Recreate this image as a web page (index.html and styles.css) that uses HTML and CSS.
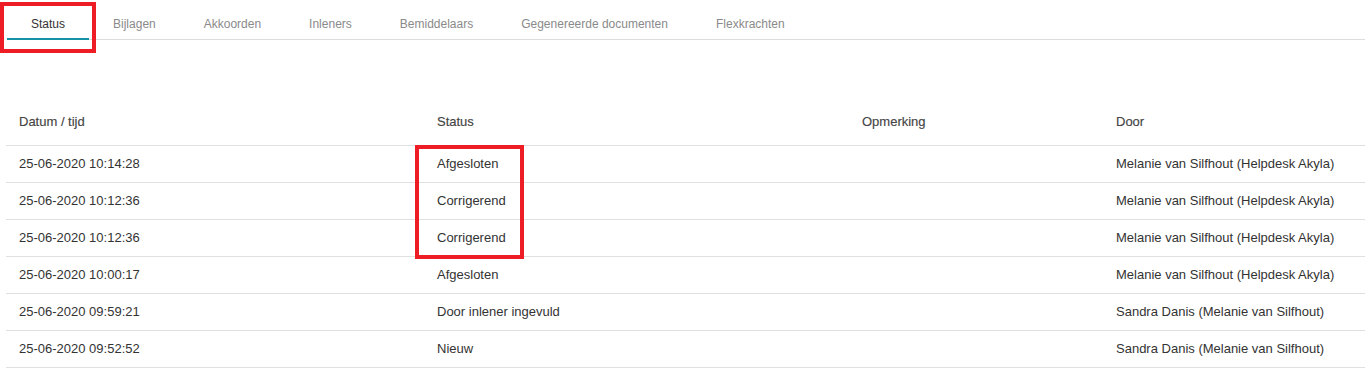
FILE: index.html
```html
<!DOCTYPE html>
<html lang="nl">
<head>
<meta charset="utf-8">
<title>Status</title>
<link rel="stylesheet" href="styles.css">
</head>
<body>
<div class="page">
  <nav class="tabs">
    <a class="tab active">Status</a>
    <a class="tab">Bijlagen</a>
    <a class="tab">Akkoorden</a>
    <a class="tab">Inleners</a>
    <a class="tab">Bemiddelaars</a>
    <a class="tab">Gegenereerde documenten</a>
    <a class="tab">Flexkrachten</a>
  </nav>

  <div class="table">
    <div class="row head">
      <div class="cell">Datum / tijd</div>
      <div class="cell">Status</div>
      <div class="cell">Opmerking</div>
      <div class="cell">Door</div>
    </div>
    <div class="row">
      <div class="cell">25-06-2020 10:14:28</div>
      <div class="cell">Afgesloten</div>
      <div class="cell"></div>
      <div class="cell">Melanie van Silfhout (Helpdesk Akyla)</div>
    </div>
    <div class="row">
      <div class="cell">25-06-2020 10:12:36</div>
      <div class="cell">Corrigerend</div>
      <div class="cell"></div>
      <div class="cell">Melanie van Silfhout (Helpdesk Akyla)</div>
    </div>
    <div class="row">
      <div class="cell">25-06-2020 10:12:36</div>
      <div class="cell">Corrigerend</div>
      <div class="cell"></div>
      <div class="cell">Melanie van Silfhout (Helpdesk Akyla)</div>
    </div>
    <div class="row">
      <div class="cell">25-06-2020 10:00:17</div>
      <div class="cell">Afgesloten</div>
      <div class="cell"></div>
      <div class="cell">Melanie van Silfhout (Helpdesk Akyla)</div>
    </div>
    <div class="row">
      <div class="cell">25-06-2020 09:59:21</div>
      <div class="cell">Door inlener ingevuld</div>
      <div class="cell"></div>
      <div class="cell">Sandra Danis (Melanie van Silfhout)</div>
    </div>
    <div class="row">
      <div class="cell">25-06-2020 09:52:52</div>
      <div class="cell">Nieuw</div>
      <div class="cell"></div>
      <div class="cell">Sandra Danis (Melanie van Silfhout)</div>
    </div>
  </div>

  <div class="mark mark-tab"></div>
  <div class="mark mark-status"></div>
</div>
</body>
</html>
```

FILE: styles.css
```css
* { box-sizing: border-box; }

html, body {
  margin: 0;
  padding: 0;
  background: #fff;
}

body {
  font-family: "Liberation Sans", Arial, sans-serif;
  font-size: 13px;
  color: #333;
}

.page {
  position: relative;
  padding-left: 7px;
  min-height: 383px;
}

.tabs {
  display: flex;
  border-bottom: 1px solid #dcdcdc;
  height: 40px;
  font-size: 12px;
}

.tab {
  display: block;
  padding: 17px 24px 0;
  color: #8a8a8a;
  line-height: 14px;
  height: 40px;
  margin-bottom: -1px;
}

.tab.active {
  color: #333;
  border-bottom: 2px solid #1592a8;
}

.table {
  margin-top: 68px;
  margin-left: -1px;
}

.row {
  display: grid;
  grid-template-columns: 418px 425px 254px 1fr;
  height: 37px;
  align-items: center;
  padding-bottom: 2px;
  border-bottom: 1px solid #e0e0e0;
}

.row.head {
  height: 38px;
  align-items: start;
  padding-top: 6px;
  padding-bottom: 0;
}

.row.head .cell {
  color: #444;
  -webkit-text-stroke: 0.15px #444;
}

.cell {
  padding-left: 13px;
  line-height: 15px;
  white-space: nowrap;
}

.mark {
  position: absolute;
  border: 4px solid #ee1c25;
}

.mark-tab {
  left: 0;
  top: 2px;
  width: 96px;
  height: 51px;
}

.mark-status {
  left: 415px;
  top: 145px;
  width: 109px;
  height: 114px;
}
```
